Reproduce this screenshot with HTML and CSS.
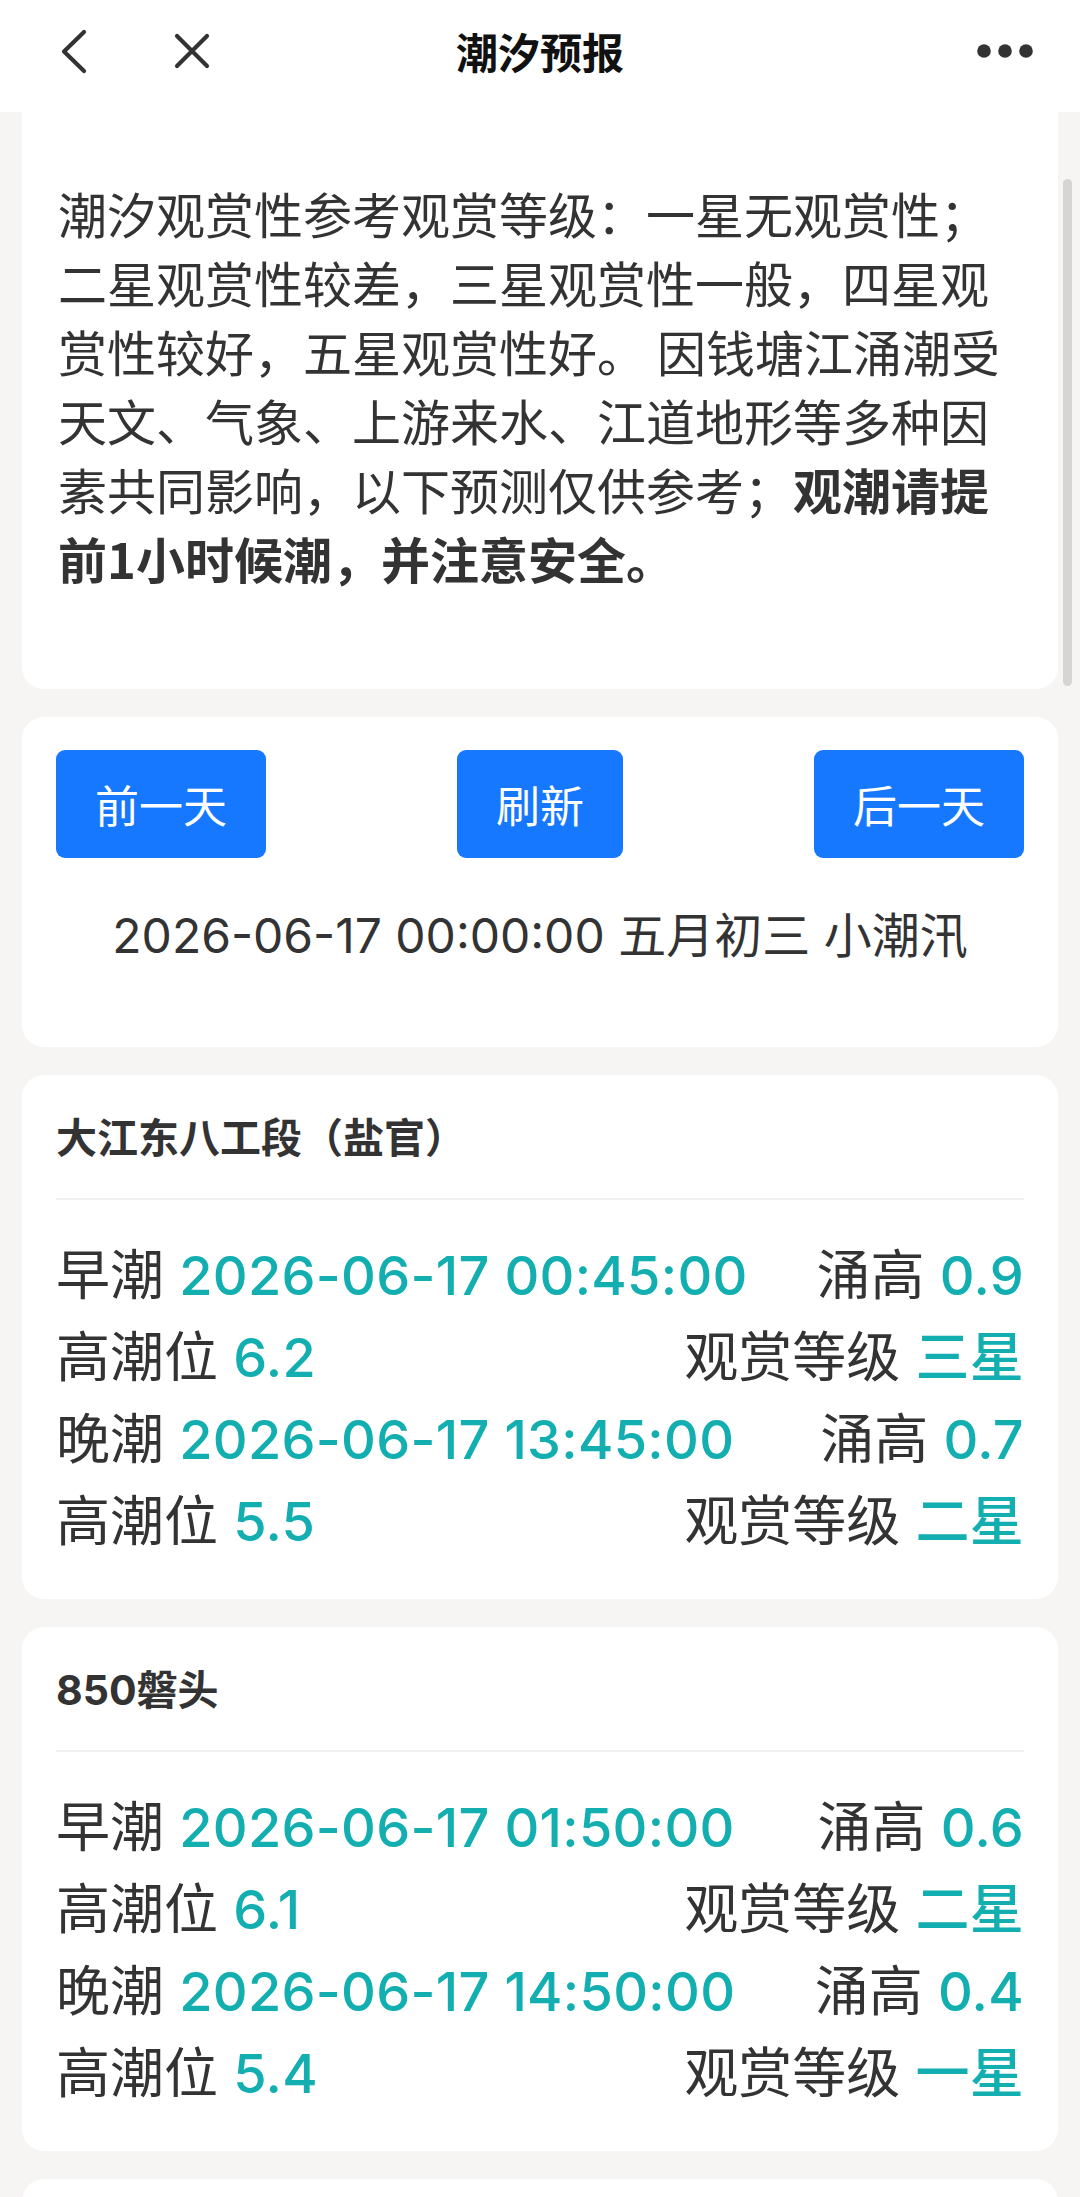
FILE: index.html
```html
<!DOCTYPE html>
<html lang="zh-CN">
<head>
<meta charset="utf-8">
<title>潮汐预报</title>
<link rel="stylesheet" href="styles.css">
</head>
<body>
<header class="nav">
  <div class="nav-left">
    <svg class="icon-back" width="40" height="48" viewBox="0 0 40 48"><path d="M30 5 L10 24.5 L30 44" fill="none" stroke="#333" stroke-width="4.2" stroke-linecap="round" stroke-linejoin="round"/></svg>
    <svg class="icon-close" width="48" height="48" viewBox="0 0 48 48"><path d="M9 9 L39 39 M39 9 L9 39" fill="none" stroke="#333" stroke-width="4.2" stroke-linecap="round"/></svg>
  </div>
  <div class="nav-title">潮汐预报</div>
  <div class="nav-right">
    <svg class="icon-more" width="62" height="20" viewBox="0 0 62 20"><circle cx="10" cy="10" r="6.8" fill="#333"/><circle cx="31" cy="10" r="6.8" fill="#333"/><circle cx="52" cy="10" r="6.8" fill="#333"/></svg>
  </div>
</header>

<main class="content">
  <section class="card intro">
    <p class="intro-text">潮汐观赏性参考观赏等级：一星无观赏性；二星观赏性较差，三星观赏性一般，四星观赏性较好，五星观赏性好。 因钱塘江涌潮受天文、气象、上游来水、江道地形等多种因素共同影响，以下预测仅供参考；<strong>观潮请提前1小时候潮，并注意安全。</strong></p>
  </section>

  <section class="card controls">
    <div class="btn-row">
      <button class="btn">前一天</button>
      <button class="btn">刷新</button>
      <button class="btn">后一天</button>
    </div>
    <div class="date-line">2026-06-17 00:00:00 五月初三 小潮汛</div>
  </section>

  <section class="card station">
    <h2 class="station-name">大江东八工段（盐官）</h2>
    <div class="divider"></div>
    <div class="rows">
      <div class="row"><span class="label">早潮 <b class="val">2026-06-17 00:45:00</b></span><span class="label">涌高 <b class="val">0.9</b></span></div>
      <div class="row"><span class="label">高潮位 <b class="val">6.2</b></span><span class="label">观赏等级 <b class="val">三星</b></span></div>
      <div class="row"><span class="label">晚潮 <b class="val">2026-06-17 13:45:00</b></span><span class="label">涌高 <b class="val">0.7</b></span></div>
      <div class="row"><span class="label">高潮位 <b class="val">5.5</b></span><span class="label">观赏等级 <b class="val">二星</b></span></div>
    </div>
  </section>

  <section class="card station">
    <h2 class="station-name">850磐头</h2>
    <div class="divider"></div>
    <div class="rows">
      <div class="row"><span class="label">早潮 <b class="val">2026-06-17 01:50:00</b></span><span class="label">涌高 <b class="val">0.6</b></span></div>
      <div class="row"><span class="label">高潮位 <b class="val">6.1</b></span><span class="label">观赏等级 <b class="val">二星</b></span></div>
      <div class="row"><span class="label">晚潮 <b class="val">2026-06-17 14:50:00</b></span><span class="label">涌高 <b class="val">0.4</b></span></div>
      <div class="row"><span class="label">高潮位 <b class="val">5.4</b></span><span class="label">观赏等级 <b class="val">一星</b></span></div>
    </div>
  </section>

  <section class="card next"></section>
</main>

<div class="scrollbar"></div>
</body>
</html>
```

FILE: styles.css
```css
html, body {
  margin: 0;
  padding: 0;
  overflow: hidden;
}
body {
  background: #f6f5f3;
  font-family: "Inter", "Noto Sans CJK SC", sans-serif;
  color: #333;
  width: 1080px;
  height: 2197px;
  position: relative;
}

.nav {
  height: 112px;
  background: #fff;
  display: grid;
  grid-template-columns: 1fr auto 1fr;
  align-items: center;
  box-sizing: border-box;
  padding-bottom: 10px;
}
.nav-left {
  display: flex;
  align-items: center;
  padding-left: 54px;
  gap: 74px;
}
.icon-back, .icon-close, .icon-more { display: block; }
.nav-title {
  font-family: "Noto Sans CJK SC", sans-serif;
  font-size: 42px;
  font-weight: 700;
  color: #111;
  line-height: 50px;
}
.nav-right {
  display: flex;
  justify-content: flex-end;
  padding-right: 44px;
}

.content {
  padding: 0 22px;
  display: flex;
  flex-direction: column;
  gap: 28px;
}
.card {
  background: #fff;
  border-radius: 22px;
}

.intro {
  border-radius: 0 0 22px 22px;
  padding: 66px 36px 97px;
}
.intro-text {
  margin: 0;
  font-family: "Noto Sans CJK SC", sans-serif;
  font-size: 49px;
  line-height: 69px;
  color: #333;
}
.intro-text strong { font-weight: 700; }

.controls {
  padding: 33px 34px 77px;
}
.btn-row {
  display: flex;
  justify-content: space-between;
}
.btn {
  height: 108px;
  padding: 0 39px;
  border: none;
  border-radius: 9px;
  background: #1677ff;
  color: #fff;
  font-family: "Noto Sans CJK SC", sans-serif;
  font-size: 44px;
  font-weight: 400;
}
.date-line {
  margin-top: 44px;
  text-align: center;
  font-size: 48px;
  line-height: 68px;
  color: #333;
}

.station {
  padding: 40px 34px 36px;
}
.station-name {
  margin: 0;
  font-size: 41px;
  line-height: 46px;
  font-weight: 700;
  color: #333;
}
.divider {
  margin-top: 37px;
  height: 2px;
  background: #f0f0f0;
}
.rows {
  margin-top: 35px;
}
.row {
  display: flex;
  justify-content: space-between;
  align-items: center;
  height: 82px;
  font-size: 54px;
  line-height: 82px;
}
.label {
  color: #333;
  white-space: nowrap;
}
.val {
  color: #13aeb0;
  font-weight: 500;
  letter-spacing: 0.3px;
}

.next {
  height: 220px;
}

.scrollbar {
  position: absolute;
  top: 179px;
  right: 8px;
  width: 9px;
  height: 507px;
  border-radius: 5px;
  background: #d6d5d4;
}
```
